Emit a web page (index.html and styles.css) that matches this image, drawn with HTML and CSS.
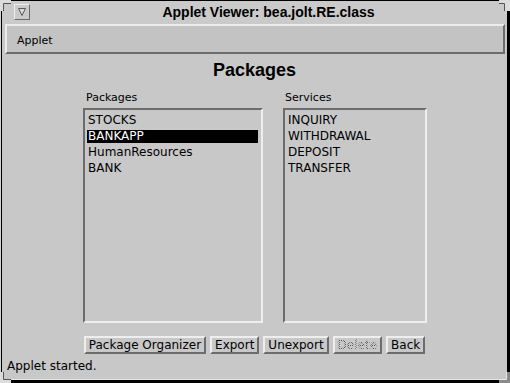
FILE: index.html
```html
<!DOCTYPE html>
<html>
<head>
<meta charset="utf-8">
<link rel="stylesheet" href="styles.css">
</head>
<body>
<div class="frame">
  <div class="titlebar">
    <div class="menu-btn">
      <svg class="menu-tri" width="12" height="12" viewBox="0 0 12 12"><path d="M2.5 2.5H9.5L6 9.5Z" fill="#d8d8d8" stroke="#5a5a5a" stroke-width="1"/></svg>
    </div>
    <div class="title">Applet Viewer: bea.jolt.RE.class</div>
  </div>
  <div class="menubar">Applet</div>
  <div class="content">
    <h1 class="heading">Packages</h1>
    <div class="columns">
      <div class="col col-packages">
        <div class="label">Packages</div>
        <div class="list">
          <div class="item"><span class="item-text">STOCKS</span></div>
          <div class="item"><span class="item-text selected">BANKAPP</span></div>
          <div class="item"><span class="item-text">HumanResources</span></div>
          <div class="item"><span class="item-text">BANK</span></div>
        </div>
      </div>
      <div class="col col-services">
        <div class="label">Services</div>
        <div class="list">
          <div class="item"><span class="item-text">INQUIRY</span></div>
          <div class="item"><span class="item-text">WITHDRAWAL</span></div>
          <div class="item"><span class="item-text">DEPOSIT</span></div>
          <div class="item"><span class="item-text">TRANSFER</span></div>
        </div>
      </div>
    </div>
    <div class="buttons">
      <div class="btn">Package Organizer</div>
      <div class="btn">Export</div>
      <div class="btn">Unexport</div>
      <div class="btn disabled"><span class="stipple">Delete</span></div>
      <div class="btn">Back</div>
    </div>
    <div class="status">Applet started.</div>
  </div>
  <svg class="corner corner-tl" width="11" height="11" viewBox="0 0 11 11"><path d="M0 0H11V3H3V11H0Z" fill="#dcdcdc"/><path d="M11 3.5H3.5V11" stroke="#555" fill="none"/></svg>
  <svg class="corner corner-tr" width="11" height="11" viewBox="0 0 11 11"><path d="M0 0H11V11H6V4H0Z" fill="#dcdcdc"/><path d="M0 3.5H5.5V11" stroke="#555" fill="none"/></svg>
  <svg class="corner corner-bl" width="11" height="11" viewBox="0 0 11 11"><path d="M0 0H3V8H11V11H0Z" fill="#dcdcdc"/><path d="M3.5 0V7.5H11" stroke="#555" fill="none"/></svg>
  <svg class="corner corner-br" width="11" height="11" viewBox="0 0 11 11"><path d="M7 0H11V11H0V7H7Z" fill="#8a8a8a"/><path d="M0 7.5H7.5V0" stroke="#e8e8e8" fill="none"/></svg>
</div>
</body>
</html>
```
FILE: styles.css
```css
html, body {
  margin: 0;
  padding: 0;
  background: #d4d4d4;
}
body {
  width: 510px;
  height: 383px;
  overflow: hidden;
  font-family: "DejaVu Sans", sans-serif;
  color: #000;
}
.frame {
  position: relative;
  margin-left: 1px;
  width: 505px;
  height: 379px;
  border-top: 1px solid #000;
  border-left: 1px solid #000;
  border-right: 3px solid #000;
  border-bottom: 3px solid #000;
  background: #c8c8c8;
  box-shadow: inset 0 -1px 0 #e4e4e4;
}
.titlebar {
  height: 23px;
  display: flex;
  align-items: flex-start;
  background: #cacaca;
}
.menu-btn {
  margin-left: 12px;
  margin-top: 3px;
  width: 16px;
  height: 16px;
  box-sizing: border-box;
  border: 1px solid;
  border-color: #eeeeee #6a6a6a #6a6a6a #eeeeee;
  display: flex;
  align-items: center;
  justify-content: center;
}
.menu-tri {
  display: block;
}
.title {
  flex: 1;
  text-align: center;
  font-family: "Liberation Sans", Arial, sans-serif;
  font-weight: bold;
  font-size: 14px;
  line-height: 23px;
  white-space: nowrap;
}
.menubar {
  margin: 0 2px 0 3px;
  height: 30px;
  box-sizing: border-box;
  border: 2px solid;
  border-color: #ececec #6c6c6c #6c6c6c #ececec;
  background: #c3c3c3;
  padding: 8px 0 0 10px;
  font-size: 11px;
  line-height: 13px;
}
.content {
  padding-top: 5px;
}
.heading {
  margin: 0;
  text-align: center;
  font-family: "Liberation Sans", Arial, sans-serif;
  font-weight: bold;
  font-size: 18px;
  line-height: 22px;
}
.columns {
  margin-top: 10px;
  display: flex;
  gap: 20px;
  padding-left: 81px;
}
.col-packages {
  width: 180px;
}
.col-services {
  width: 144px;
}
.label {
  font-size: 11px;
  line-height: 13px;
  padding-left: 3px;
  margin-bottom: 4px;
}
.col-services .label {
  padding-left: 2px;
}
.list {
  height: 215px;
  box-sizing: border-box;
  border: 2px solid;
  border-color: #6c6c6c #eeeeee #eeeeee #6c6c6c;
  padding: 4px 3px 0 2px;
}
.item {
  height: 16px;
  font-size: 12px;
}
.item-text {
  display: block;
  height: 13px;
  line-height: 13px;
  padding-left: 1px;
  white-space: nowrap;
}
.item-text.selected {
  background: #000;
  color: #fff;
}
.buttons {
  margin-top: 13px;
  display: flex;
  justify-content: center;
  gap: 4px;
}
.btn {
  height: 18px;
  box-sizing: border-box;
  border: 2px solid;
  border-color: #eeeeee #6c6c6c #6c6c6c #eeeeee;
  padding: 0 3px;
  font-size: 12px;
  line-height: 14px;
  white-space: nowrap;
}
.stipple {
  color: transparent;
  background: repeating-conic-gradient(#555 0 25%, transparent 0 50%) 0 0 / 2px 2px;
  -webkit-background-clip: text;
  background-clip: text;
}
.status {
  margin-top: 5px;
  padding-left: 5px;
  font-size: 12px;
  line-height: 15px;
}
.corner {
  position: absolute;
  display: block;
}
.corner-tl {
  left: -2px;
  top: -1px;
}
.corner-tr {
  right: -3px;
  top: -1px;
}
.corner-bl {
  left: -2px;
  bottom: -3px;
}
.corner-br {
  right: -3px;
  bottom: -3px;
}
```
